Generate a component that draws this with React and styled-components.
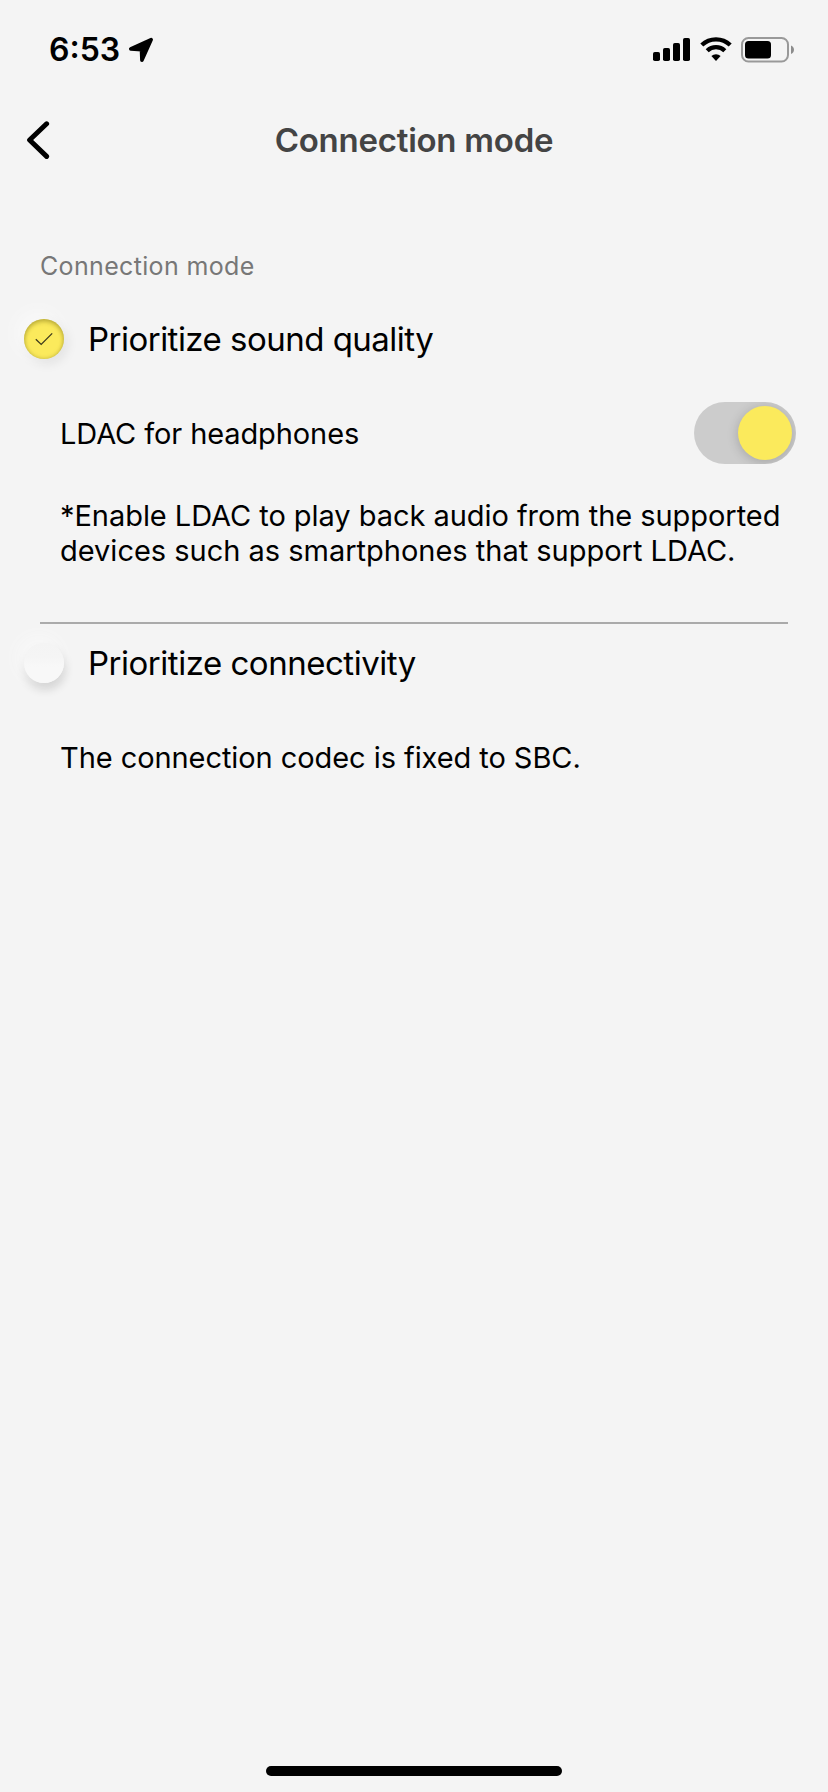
import React, { useState } from 'react';
import styled, { createGlobalStyle } from 'styled-components';

export default function App() {
  const [mode, setMode] = useState('quality');
  const [ldac, setLdac] = useState(true);

  return (
    <>
      <GlobalStyle />
      <Screen>
        <StatusBar>
          <StatusLeft>
            <Time>6:53</Time>
            <LocationIcon />
          </StatusLeft>
          <StatusRight>
            <SignalIcon />
            <WifiIcon />
            <BatteryIcon />
          </StatusRight>
        </StatusBar>

        <NavBar>
          <BackButton aria-label="Back">
            <BackIcon />
          </BackButton>
          <Title>Connection mode</Title>
        </NavBar>

        <Content>
          <SectionLabel>Connection mode</SectionLabel>

          <Option onClick={() => setMode('quality')}>
            <Radio $checked={mode === 'quality'}>
              {mode === 'quality' && <CheckIcon />}
            </Radio>
            <OptionLabel $spacing="-0.52px">Prioritize sound quality</OptionLabel>
          </Option>

          <SettingRow>
            <Text $spacing="-0.1px">LDAC for headphones</Text>
            <Toggle
              role="switch"
              aria-checked={ldac}
              $on={ldac}
              onClick={() => setLdac(!ldac)}
            >
              <Knob $on={ldac} />
            </Toggle>
          </SettingRow>

          <Note>
            <Text $spacing="-0.05px">*Enable LDAC to play back audio from the supported</Text>
            <Text $spacing="-0.01px">devices such as smartphones that support LDAC.</Text>
          </Note>

          <Divider />

          <Option $gap="9px" onClick={() => setMode('connectivity')}>
            <Radio $checked={mode === 'connectivity'}>
              {mode === 'connectivity' && <CheckIcon />}
            </Radio>
            <OptionLabel $spacing="-0.48px">Prioritize connectivity</OptionLabel>
          </Option>

          <Note $gap="47px">
            <Text $spacing="-0.07px">The connection codec is fixed to SBC.</Text>
          </Note>
        </Content>

        <HomeIndicator />
      </Screen>
    </>
  );
}

// ———————————————————————————————————————————————————
// Icons
// ———————————————————————————————————————————————————

const LocationIcon = () => (
  <svg width="26" height="26" viewBox="0 0 26 26">
    <path
      d="M23.2 2.6 L2.8 12 L13.5 12.6 L13.9 23.2 Z"
      stroke="#000"
      strokeWidth="3.6"
      strokeLinejoin="round"
    />
  </svg>
);

const SignalIcon = () => (
  <svg width="38" height="24" viewBox="0 0 38 24">
    <rect x="0" y="14" width="7" height="9" rx="1.8" />
    <rect x="10" y="10" width="7" height="13" rx="1.8" />
    <rect x="20" y="5" width="7" height="18" rx="1.8" />
    <rect x="30" y="0" width="7" height="23" rx="1.8" />
  </svg>
);

const WifiIcon = () => (
  <svg width="32" height="26" viewBox="0 0 32 26">
    <path d="M1.8 8 A20.5 20.5 0 0 1 30.2 8" fill="none" stroke="#000" strokeWidth="4.3" />
    <path d="M7.2 13.8 A12.6 12.6 0 0 1 24.8 13.8" fill="none" stroke="#000" strokeWidth="4.3" />
    <path d="M11.4 19 A6.6 6.6 0 0 1 20.6 19 L16 24 Z" />
  </svg>
);

const BatteryIcon = () => (
  <svg width="54" height="26" viewBox="0 0 54 26">
    <rect x="1" y="1" width="46" height="23.5" rx="6.5" fill="none" stroke="#999" strokeWidth="2" />
    <rect x="4" y="4" width="26" height="17.5" rx="3.5" />
    <path d="M50 8.5 C54 10 54 15.5 50 17 Z" fill="#8c8c8c" />
  </svg>
);

const BackIcon = () => (
  <svg width="24" height="40" viewBox="0 0 24 40">
    <path
      d="M20.6 3.8 L3.6 20 L20.6 36.4"
      fill="none"
      stroke="#000"
      strokeWidth="5"
      strokeLinecap="round"
      strokeLinejoin="round"
    />
  </svg>
);

const CheckIcon = () => (
  <svg width="18" height="14" viewBox="0 0 18 14">
    <path d="M0.8 7.2 L6.2 12.4 L17.2 1.4" fill="none" stroke="#3d3a1c" strokeWidth="1.3" />
  </svg>
);

// ———————————————————————————————————————————————————
// Styles
// ———————————————————————————————————————————————————

const GlobalStyle = createGlobalStyle`
  body {
    margin: 0;
    background: #f4f4f4;
  }
`;

const Screen = styled.div`
  display: flex;
  flex-direction: column;
  width: 828px;
  height: 1792px;
  overflow: hidden;
  box-sizing: border-box;
  background: #f4f4f4;
  color: #000;
  font-family: Inter, 'Liberation Sans', sans-serif;
`;

const StatusBar = styled.div`
  display: flex;
  justify-content: space-between;
  align-items: center;
  height: 100px;
  padding: 0 33px 0 49px;
  box-sizing: border-box;
`;

const StatusLeft = styled.div`
  display: flex;
  align-items: center;
  gap: 8px;
`;

const StatusRight = styled.div`
  display: flex;
  align-items: center;
  gap: 9px;
`;

const Time = styled.span`
  font-size: 32px;
  font-weight: 600;
  line-height: 40px;
`;

const NavBar = styled.div`
  display: grid;
  grid-template-columns: 80px 1fr 80px;
  align-items: center;
  height: 80px;
`;

const BackButton = styled.button`
  display: flex;
  padding: 0 0 0 26px;
  border: none;
  background: none;
  cursor: pointer;
`;

const Title = styled.h1`
  margin: 0;
  font-size: 33px;
  font-weight: 600;
  line-height: 40px;
  letter-spacing: -0.25px;
  text-align: center;
  white-space: nowrap;
  color: #444;
`;

const Content = styled.div`
  display: flex;
  flex-direction: column;
  padding-top: 70px;
`;

const SectionLabel = styled.div`
  margin-left: 40px;
  font-size: 25px;
  line-height: 32px;
  letter-spacing: 0.34px;
  color: #777;
`;

const Option = styled.div`
  display: flex;
  align-items: center;
  gap: 24px;
  height: 60px;
  margin-top: ${({ $gap }) => $gap || '27px'};
  padding-left: 24px;
  cursor: pointer;
`;

const Radio = styled.span`
  display: flex;
  align-items: center;
  justify-content: center;
  width: 40px;
  height: 40px;
  border-radius: 50%;
  background: ${({ $checked }) =>
    $checked ? '#fbea5c' : 'linear-gradient(#f4f4f4 0%, #f5f5f5 35%, #f8f8f8 60%, #f8f8f8 100%)'};
  box-shadow: ${({ $checked }) =>
    $checked
      ? 'inset 0 3px 4px rgba(120, 110, 20, 0.32), inset 0 0 4px rgba(120, 110, 20, 0.4), -6px -6px 18px #fafafa, 3px 4px 12px rgba(0, 0, 0, 0.09)'
      : '-5px -5px 18px #f9f9f9, 1px 6px 10px rgba(0, 0, 0, 0.16)'};
`;

const OptionLabel = styled.span`
  font-size: 33px;
  line-height: 40px;
  letter-spacing: ${({ $spacing }) => $spacing};
  white-space: nowrap;
`;

const SettingRow = styled.div`
  display: flex;
  align-items: center;
  justify-content: space-between;
  height: 62px;
  margin-top: 33px;
  padding: 0 32px 0 60px;
`;

const Text = styled.span`
  font-size: 29px;
  line-height: 35px;
  letter-spacing: ${({ $spacing }) => $spacing};
  white-space: nowrap;
`;

const Toggle = styled.button`
  display: flex;
  align-items: center;
  justify-content: ${({ $on }) => ($on ? 'flex-end' : 'flex-start')};
  width: 102px;
  height: 62px;
  padding: 4px;
  border: none;
  border-radius: 31px;
  background: #ccc;
  overflow: hidden;
  cursor: pointer;
`;

const Knob = styled.span`
  width: 54px;
  height: 54px;
  border-radius: 50%;
  background: ${({ $on }) => ($on ? '#fbea5c' : '#f4f4f4')};
  box-shadow: 0 2px 12px rgba(0, 0, 0, 0.2);
`;

const Note = styled.div`
  display: flex;
  flex-direction: column;
  margin-top: ${({ $gap }) => $gap || '34px'};
  padding-left: 60px;
`;

const Divider = styled.div`
  height: 2px;
  margin: 54px 40px 0;
  background: #aaa;
`;

const HomeIndicator = styled.div`
  width: 296px;
  height: 10px;
  margin: auto auto 16px;
  border-radius: 5px;
  background: #000;
`;
